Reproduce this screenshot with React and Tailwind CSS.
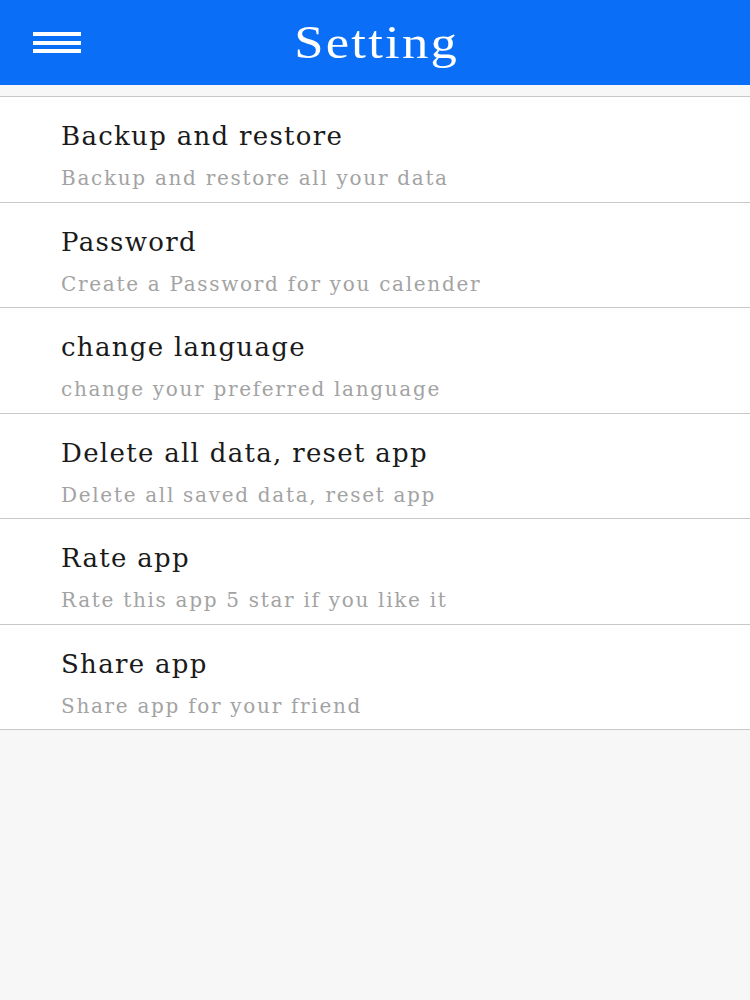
import React from 'react';

const items = [
  { title: 'Backup and restore', sub: 'Backup and restore all your data' },
  { title: 'Password', sub: 'Create a Password for you calender' },
  { title: 'change language', sub: 'change your preferred language' },
  { title: 'Delete all data, reset app', sub: 'Delete all saved data, reset app' },
  { title: 'Rate app', sub: 'Rate this app 5 star if you like it' },
  { title: 'Share app', sub: 'Share app for your friend' },
];

function SettingRow({ title, sub }) {
  return (
    <li className="h-[105.5px] border-b border-[#c9c9c9] bg-white pl-[61px] pt-[21px]">
      <div className="text-[26px] leading-[36px] text-[#1a1a1a] tracking-[1.3px]">{title}</div>
      <div className="mt-[10px] text-[20px] leading-[28px] text-[#a3a3a3] tracking-[1.7px]">{sub}</div>
    </li>
  );
}

export default function App() {
  return (
    <div className="min-h-[1000px] w-[750px] bg-[#f8f7f7]" style={{ fontFamily: '"DejaVu Serif", serif' }}>
      <header className="relative flex h-[85px] items-center justify-center bg-[#0a6ef6]">
        <button className="absolute left-[33px] top-[32px] flex w-[48px] flex-col gap-[4.5px]">
          <span className="h-[4px] w-full bg-white" />
          <span className="h-[4px] w-full bg-white" />
          <span className="h-[4px] w-full bg-white" />
        </button>
        <h1
          className="ml-[4px] scale-x-[1.12] text-[47px] leading-none text-white tracking-[2px]"
          style={{ fontFamily: '"Liberation Serif", serif' }}
        >
          Setting
        </h1>
      </header>
      <ul className="mt-[11px] border-t border-[#c9c9c9]">
        {items.map((it) => (
          <SettingRow key={it.title} title={it.title} sub={it.sub} />
        ))}
      </ul>
    </div>
  );
}
